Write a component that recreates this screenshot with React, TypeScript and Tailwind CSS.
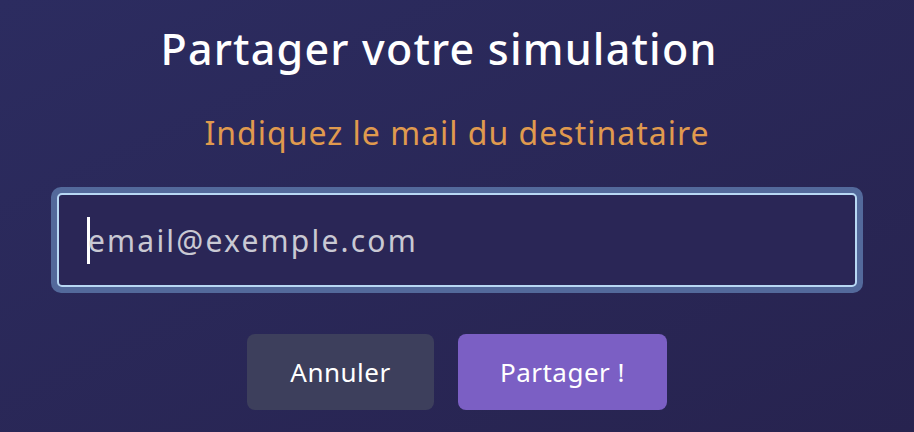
import React from "react";

export default function App() {
  return (
    <div
      className="w-full h-[432px] overflow-hidden bg-gradient-to-br from-[#2c2c60] to-[#27234f] flex flex-col items-center"
      style={{ fontFamily: "'Noto Sans', Lato, sans-serif" }}
    >
      <h1 className="mt-[20px] mr-[36px] text-[43px] leading-[58px] text-white font-medium tracking-[1.2px]">
        Partager votre simulation
      </h1>
      <p className="mt-[35px] text-[32px] leading-[40px] text-[#e09a4e] tracking-[1px]">
        Indiquez le mail du destinataire
      </p>
      <div className="mt-[34px] w-[812px] p-[6px] rounded-[10px] bg-[#53699b]">
        <div className="h-[94px] rounded-[5px] border-2 border-[#b8d8f4] bg-[#2a2656] flex items-center pl-[28px]">
          <span className="w-[3px] h-[47px] bg-white" />
          <span className="text-[30px] text-[#c9c9d3] -ml-[2px] tracking-[2.2px]">email@exemple.com</span>
        </div>
      </div>
      <div className="mt-[41px] flex gap-[24px]">
        <button className="w-[187px] h-[76px] rounded-[8px] bg-[#3d3f5c] text-white text-[26px] tracking-[0.5px]">
          Annuler
        </button>
        <button className="w-[209px] h-[76px] rounded-[8px] bg-[#7b5fc4] text-white text-[26px] tracking-[0.5px]">
          Partager !
        </button>
      </div>
    </div>
  );
}
